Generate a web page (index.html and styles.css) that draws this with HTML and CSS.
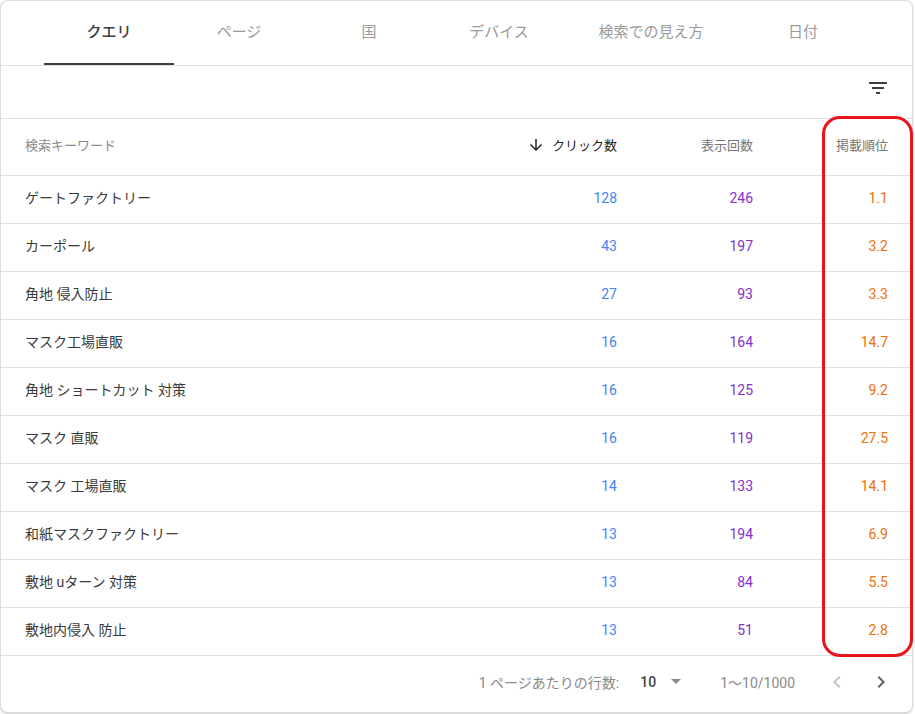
FILE: index.html
```html
<!DOCTYPE html>
<html lang="ja">
<head>
<meta charset="utf-8">
<link rel="stylesheet" href="styles.css">
</head>
<body>
<div class="card">
  <div class="tabs">
    <div class="tab active">クエリ</div>
    <div class="tab">ページ</div>
    <div class="tab">国</div>
    <div class="tab">デバイス</div>
    <div class="tab wide">検索での見え方</div>
    <div class="tab">日付</div>
  </div>
  <div class="toolbar">
    <svg class="filter" viewBox="0 0 24 24" width="24" height="24"><path d="M10 18h4v-2h-4v2zM3 6v2h18V6H3zm3 7h12v-2H6v2z" fill="#3c4043"/></svg>
  </div>
  <div class="row head">
    <div class="c-key">検索キーワード</div>
    <div class="c-num sorted"><svg class="arrow" viewBox="0 0 24 24" width="18" height="18"><path d="M20 12l-1.41-1.41L13 16.17V4h-2v12.17l-5.58-5.59L4 12l8 8 8-8z" fill="#212121"/></svg>クリック数</div>
    <div class="c-num">表示回数</div>
    <div class="c-num">掲載順位</div>
  </div>
  <div class="row"><div class="c-key">ゲートファクトリー</div><div class="c-num clicks">128</div><div class="c-num imps">246</div><div class="c-num pos">1.1</div></div>
  <div class="row"><div class="c-key">カーポール</div><div class="c-num clicks">43</div><div class="c-num imps">197</div><div class="c-num pos">3.2</div></div>
  <div class="row"><div class="c-key">角地 侵入防止</div><div class="c-num clicks">27</div><div class="c-num imps">93</div><div class="c-num pos">3.3</div></div>
  <div class="row"><div class="c-key">マスク工場直販</div><div class="c-num clicks">16</div><div class="c-num imps">164</div><div class="c-num pos">14.7</div></div>
  <div class="row"><div class="c-key">角地 ショートカット 対策</div><div class="c-num clicks">16</div><div class="c-num imps">125</div><div class="c-num pos">9.2</div></div>
  <div class="row"><div class="c-key">マスク 直販</div><div class="c-num clicks">16</div><div class="c-num imps">119</div><div class="c-num pos">27.5</div></div>
  <div class="row"><div class="c-key">マスク 工場直販</div><div class="c-num clicks">14</div><div class="c-num imps">133</div><div class="c-num pos">14.1</div></div>
  <div class="row"><div class="c-key">和紙マスクファクトリー</div><div class="c-num clicks">13</div><div class="c-num imps">194</div><div class="c-num pos">6.9</div></div>
  <div class="row"><div class="c-key">敷地 uターン 対策</div><div class="c-num clicks">13</div><div class="c-num imps">84</div><div class="c-num pos">5.5</div></div>
  <div class="row"><div class="c-key">敷地内侵入 防止</div><div class="c-num clicks">13</div><div class="c-num imps">51</div><div class="c-num pos">2.8</div></div>
  <div class="footer">
    <span class="label">1 ページあたりの行数:</span>
    <span class="per">10</span>
    <span class="caret"></span>
    <span class="range">1〜10/1000</span>
    <svg class="nav" viewBox="0 0 24 24" width="24" height="24"><path d="M15.41 7.41L14 6l-6 6 6 6 1.41-1.41L10.83 12z" fill="#c4c4c4"/></svg>
    <svg class="nav" viewBox="0 0 24 24" width="24" height="24"><path d="M10 6L8.59 7.41 13.17 12l-4.58 4.59L10 18l6-6z" fill="#5f6368"/></svg>
  </div>
  <div class="highlight"></div>
</div>
</body>
</html>
```
FILE: styles.css
```css
* { box-sizing: border-box; }
html, body { margin: 0; padding: 0; background: #fff; }
body {
  font-family: Roboto, "Noto Sans CJK JP", sans-serif;
  color: #212121;
  width: 915px;
  height: 714px;
  overflow: hidden;
}
.card {
  position: relative;
  width: 913px;
  height: 713px;
  border: 1px solid #dcdcdc;
  border-radius: 8px;
  box-shadow: 0 1px 2px rgba(60,64,67,.25);
  background: #fff;
  display: flex;
  flex-direction: column;
}
.tabs {
  height: 65px;
  display: flex;
  padding-left: 43px;
  border-bottom: 1px solid #e0e0e0;
}
.tab {
  width: 130px;
  display: flex;
  align-items: center;
  justify-content: center;
  font-size: 15px;
  color: #9a9a9a;
  border-bottom: 2px solid transparent;
  padding-bottom: 3px;
}
.tab.wide { width: 174px; }
.tab.active {
  color: #3c4043;
  font-weight: 500;
  border-bottom-color: #3c4043;
}
.toolbar {
  height: 53px;
  display: flex;
  align-items: center;
  justify-content: flex-end;
  padding-right: 22px;
  padding-bottom: 8px;
  border-bottom: 1px solid #e0e0e0;
}
.filter { display: block; }
.row {
  height: 48px;
  display: grid;
  grid-template-columns: 1fr 136px 136px 135px;
  align-items: center;
  padding: 0 24px 6px;
  border-bottom: 1px solid #e0e0e0;
  font-size: 14px;
}
.row.head {
  height: 57px;
  font-size: 13px;
  color: #757575;
  padding-bottom: 5px;
}
.c-key { color: #3a3a3a; }
.head .c-key { color: #8a8a8a; }
.c-num { text-align: right; font-size: 14px; padding-top: 2px; }
.head .c-num { display: flex; justify-content: flex-end; align-items: center; font-size: 13px; padding-top: 0; }
.sorted { color: #212121; }
.arrow { margin-right: 7px; }
.clicks { color: #4285f4; }
.imps { color: #8430ce; }
.pos { color: #e8710a; }
.footer {
  flex: 1;
  display: flex;
  align-items: center;
  justify-content: flex-end;
  padding-right: 19px;
  padding-bottom: 5px;
  font-size: 14px;
  color: #8a8a8a;
}
.label { margin-right: 21px; }
.per { color: #444; font-weight: 500; font-size: 14px; }
.caret {
  width: 0; height: 0;
  border-left: 5px solid transparent;
  border-right: 5px solid transparent;
  border-top: 5px solid #8a8a8a;
  margin-left: 15px;
  margin-right: 39px;
}
.range { margin-right: 30px; color: #8a8a8a; }
.nav { display: block; }
.nav + .nav { margin-left: 20px; }
.highlight {
  position: absolute;
  left: 821px;
  top: 115px;
  width: 91px;
  height: 541px;
  border: 3.5px solid #e8141c;
  border-radius: 18px;
  pointer-events: none;
}
```
